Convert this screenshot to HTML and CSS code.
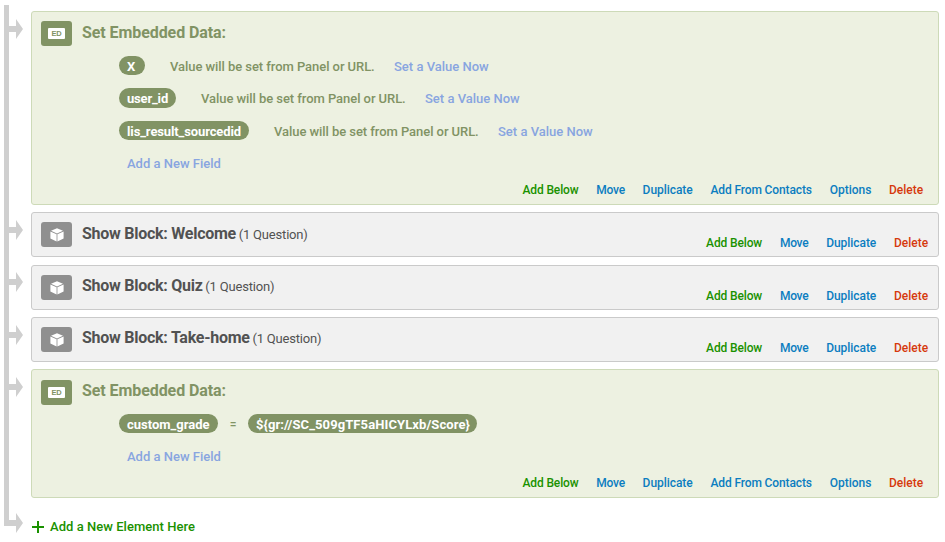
FILE: index.html
```html
<!DOCTYPE html>
<html lang="en">
<head>
<meta charset="utf-8">
<title>Survey Flow</title>
<link rel="stylesheet" href="styles.css">
</head>
<body>
<svg class="defs" width="0" height="0">
  <symbol id="arrow" viewBox="0 0 14 20"><path d="M0 7h7V0l7 10-7 10v-7H0z"/></symbol>
  <symbol id="cube" viewBox="0 0 14 14"><path d="M7 .2 13 2.7 7 5.4 1 2.7zM.4 3.5 6.6 6.3v7.2L.4 10.6zM13.6 3.5 7.4 6.3v7.2l6.2-2.9z"/></symbol>
</svg>
<main class="flow">
  <div class="row">
    <svg class="arrow"><use href="#arrow"/></svg>
    <section class="card data first">
      <div class="icon"><span class="ed">ED</span></div>
      <div class="body">
        <h2 class="title">Set Embedded Data:</h2>
        <div class="fields">
          <div class="field"><span class="pill x">X</span><span class="note">Value will be set from Panel or URL.</span><a class="set">Set a Value Now</a></div>
          <div class="field"><span class="pill user">user_id</span><span class="note">Value will be set from Panel or URL.</span><a class="set">Set a Value Now</a></div>
          <div class="field"><span class="pill source">lis_result_sourcedid</span><span class="note">Value will be set from Panel or URL.</span><a class="set">Set a Value Now</a></div>
          <div class="field"><a class="new">Add a New Field</a></div>
        </div>
        <nav class="actions"><a class="add">Add Below</a><a class="move">Move</a><a class="dup">Duplicate</a><a class="contacts">Add From Contacts</a><a class="opt">Options</a><a class="del">Delete</a></nav>
      </div>
    </section>
  </div>
  <div class="row">
    <svg class="arrow"><use href="#arrow"/></svg>
    <section class="card block gap-after">
      <div class="icon"><svg class="cube"><use href="#cube"/></svg></div>
      <div class="body">
        <h2 class="title">Show Block: Welcome <small>(1 Question)</small></h2>
        <nav class="actions"><a class="add">Add Below</a><a class="move">Move</a><a class="dup">Duplicate</a><a class="del">Delete</a></nav>
      </div>
    </section>
  </div>
  <div class="row">
    <svg class="arrow raised"><use href="#arrow"/></svg>
    <section class="card block">
      <div class="icon"><svg class="cube"><use href="#cube"/></svg></div>
      <div class="body">
        <h2 class="title high">Show Block: Quiz <small>(1 Question)</small></h2>
        <nav class="actions"><a class="add">Add Below</a><a class="move">Move</a><a class="dup">Duplicate</a><a class="del">Delete</a></nav>
      </div>
    </section>
  </div>
  <div class="row">
    <svg class="arrow"><use href="#arrow"/></svg>
    <section class="card block">
      <div class="icon"><svg class="cube"><use href="#cube"/></svg></div>
      <div class="body">
        <h2 class="title high">Show Block: Take-home <small>(1 Question)</small></h2>
        <nav class="actions"><a class="add">Add Below</a><a class="move">Move</a><a class="dup">Duplicate</a><a class="del">Delete</a></nav>
      </div>
    </section>
  </div>
  <div class="row">
    <svg class="arrow"><use href="#arrow"/></svg>
    <section class="card data last">
      <div class="icon"><span class="ed">ED</span></div>
      <div class="body">
        <h2 class="title">Set Embedded Data:</h2>
        <div class="fields">
          <div class="field"><span class="pill grade">custom_grade</span><span class="eq">=</span><span class="pill score">${gr://SC_509gTF5aHICYLxb/Score}</span></div>
          <div class="field"><a class="new">Add a New Field</a></div>
        </div>
        <nav class="actions"><a class="add">Add Below</a><a class="move">Move</a><a class="dup">Duplicate</a><a class="contacts">Add From Contacts</a><a class="opt">Options</a><a class="del">Delete</a></nav>
      </div>
    </section>
  </div>
  <div class="row end">
    <svg class="arrow"><use href="#arrow"/></svg>
    <a class="element"><svg class="plus" viewBox="0 0 12 12"><path d="M6 0v12M0 6h12"/></svg>Add a New Element Here</a>
  </div>
</main>
</body>
</html>
```
FILE: styles.css
```css
* { box-sizing: border-box; }
body { margin: 0; height: 542px; padding-top: 5px; background: #fff; font-family: Roboto, "Liberation Sans", sans-serif; }
.defs { display: block; }
.flow {
  height: 521px;
  margin: 0 6px 0 4px;
  padding-top: 6px;
  border-left: 5px solid #cfcfcf;
}
.row { display: flex; align-items: flex-start; margin-bottom: 7px; }
.arrow { flex: none; width: 14px; height: 20px; margin: 8px 8px 0 0; fill: #cfcfcf; }
.arrow.raised { margin-top: 7px; }
.card { display: flex; flex: 1; border: 1px solid #cacaca; border-radius: 3px; background: #f1f1f1; padding: 9px 10px 0 9px; height: 45px; }
.card.gap-after { margin-bottom: 1px; }
.card.data { border-color: #cddab8; background: #edf1e1; padding-right: 15px; }
.card.first { height: 194px; }
.card.last { height: 129px; }
.last .icon { margin-top: 1px; }
.icon { flex: none; display: flex; align-items: center; justify-content: center; width: 31px; height: 25px; border-radius: 3px; background: #8f8f8f; }
.data .icon { background: #819364; }
.ed { width: 17px; height: 11px; border-radius: 1px; background: #fff; color: #819364; font: bold 7.5px/12px "Liberation Sans", sans-serif; text-align: center; letter-spacing: -.2px; }
.cube { width: 14px; height: 14px; fill: #fff; }
.body { display: flex; flex: 1; justify-content: space-between; margin-left: 10px; }
.data .body { flex-direction: column; justify-content: flex-start; }
.title { margin: 2px 0 0; font-size: 16px; line-height: 19px; font-weight: 700; letter-spacing: -.26px; color: #525252; white-space: nowrap; }
.title.high { margin-top: 1px; }
.title small { margin-left: -1px; font-size: 13px; font-weight: 400; letter-spacing: -.19px; }
.data .title { color: #819364; letter-spacing: -.08px; }
.fields { margin: 7px 0 0 37px; font-size: 13px; font-weight: 500; color: #819364; }
.field { display: flex; align-items: center; height: 32.5px; white-space: nowrap; }
.pill { height: 19.5px; padding-left: 8px; border-radius: 10px; background: #819364; color: #fff; font-weight: 700; line-height: 21px; }
.pill.x { width: 26px; }
.pill.user { width: 57px; letter-spacing: -.18px; }
.pill.source { width: 130px; letter-spacing: -.12px; }
.pill.grade { width: 99px; }
.pill.score { width: 229px; letter-spacing: .1px; }
.note { width: 204.5px; margin-left: 25px; letter-spacing: -.06px; }
.note, .set, .new, .eq { padding-top: 1.5px; }
.set, .new { color: #88a5e0; }
.set { margin-left: 19.5px; }
.new { margin-left: 8px; }
.eq { width: 30px; text-align: center; font-size: 12px; }
.actions { display: flex; justify-content: flex-end; gap: 17.8px; margin-top: auto; padding-bottom: 6px; font-size: 12px; line-height: 14px; font-weight: 500; color: #0b7dc0; white-space: nowrap; }
.data .actions { padding-bottom: 7px; }
.add { width: 56px; letter-spacing: -.14px; color: #1a9100; }
.move { width: 28.5px; letter-spacing: -.25px; }
.dup { width: 50px; letter-spacing: -.06px; }
.contacts { width: 101.5px; letter-spacing: -.12px; }
.opt { width: 41.5px; }
.del { width: 34px; color: #d6390d; }
.row.end { margin: 0; }
.end .arrow { margin-top: 8px; }
.element { display: flex; align-items: center; margin-top: 14px; font-size: 13px; line-height: 16px; font-weight: 500; letter-spacing: .04px; color: #1a9100; }
.plus { width: 12px; height: 12px; margin: 0 6px 0 1px; fill: none; stroke: #1a9100; stroke-width: 2; }
```
